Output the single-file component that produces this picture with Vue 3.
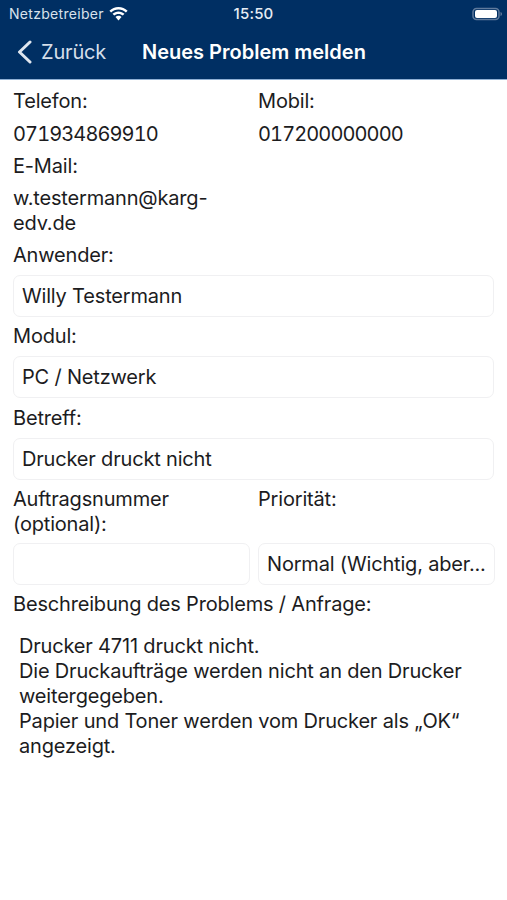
<script setup>
const contact = [
  { label: 'Telefon:', value: '071934869910' },
  { label: 'Mobil:', value: '017200000000' },
]
const fields = [
  { label: 'Anwender:', value: 'Willy Testermann' },
  { label: 'Modul:', value: 'PC / Netzwerk' },
  { label: 'Betreff:', value: 'Drucker druckt nicht' },
]
const lines = [
  'Drucker 4711 druckt nicht.',
  'Die Druckaufträge werden nicht an den Drucker',
  'weitergegeben.',
  'Papier und Toner werden vom Drucker als „OK“',
  'angezeigt.',
]
</script>

<template>
  <div class="page">
    <header class="head">
      <div class="status">
        <div class="carrier">
          <span>Netzbetreiber</span>
          <svg class="wifi" width="19" height="14" viewBox="0 0 19 14">
            <path d="M9.500 0C6 0 2.800 1.400.4 3.700l1.700 1.800C4 3.600 6.600 2.500 9.500 2.500s5.500 1.100 7.400 3l1.700-1.800C16.200 1.400 13 0 9.500 0z" fill="#fff"/>
            <path d="M9.500 4.400c-2.300 0-4.400.9-6 2.400l1.700 1.800c1.100-1.100 2.600-1.700 4.300-1.700s3.200.6 4.300 1.700l1.700-1.800c-1.600-1.500-3.700-2.400-6-2.400z" fill="#fff"/>
            <path d="M9.500 8.800c-1.200 0-2.200.5-3 1.200l3 3.400 3-3.400c-.8-.7-1.800-1.200-3-1.200z" fill="#fff"/>
          </svg>
        </div>
        <span class="time">15:50</span>
        <svg class="battery" width="31" height="14" viewBox="0 0 31 14">
          <rect x="1" y="1.500" width="26" height="11" rx="3.500" fill="none" stroke="#5f7a9c" stroke-width="1.500"/>
          <rect x="3" y="3" width="22" height="8" rx="2" fill="#fff"/>
          <path d="M28.500 5v4c.9-.3 1.500-1.100 1.500-2s-.6-1.700-1.500-2z" fill="#5f7a9c"/>
        </svg>
      </div>
      <nav class="nav">
        <div class="back">
          <svg width="16" height="24" viewBox="0 0 16 24">
            <path d="M14 2 3.500 12 14 22" fill="none" stroke="#dfe6ef" stroke-width="3" stroke-linecap="round" stroke-linejoin="round"/>
          </svg>
          <span>Zurück</span>
        </div>
        <h1 class="title">Neues Problem melden</h1>
      </nav>
    </header>

    <main class="form">
      <div class="cols contact">
        <div v-for="c in contact" :key="c.label" class="col">
          <div class="label">{{ c.label }}</div>
          <div class="value num">{{ c.value }}</div>
        </div>
      </div>
      <div class="mail">
        <div class="label">E-Mail:</div>
        <div class="value wrap">w.testermann@karg-<br>edv.de</div>
      </div>

      <div v-for="f in fields" :key="f.label" class="field">
        <div class="label">{{ f.label }}</div>
        <div class="input">{{ f.value }}</div>
      </div>

      <div class="cols order">
        <div class="col">
          <div class="label two">Auftragsnummer<br>(optional):</div>
          <div class="input"></div>
        </div>
        <div class="col">
          <div class="label two">Priorität:</div>
          <div class="input">Normal (Wichtig, aber...</div>
        </div>
      </div>

      <div class="label desc">Beschreibung des Problems / Anfrage:</div>
      <div class="text">
        <div v-for="l in lines" :key="l">{{ l }}</div>
      </div>
    </main>
  </div>
</template>

<style scoped>
.page {
  width: 507px;
  height: 900px;
  background: #fff;
  overflow: hidden;
  font-family: Inter, "Liberation Sans", sans-serif;
  color: #1c1c1e;
  font-size: 20px;
  letter-spacing: -0.18px;
}
.head {
  height: 79px;
  background: #002f63;
  border-bottom: 1px solid #8fb0d4;
  color: #fff;
}
.status {
  height: 27px;
  display: grid;
  grid-template-columns: 1fr auto 1fr;
  align-items: center;
  padding: 0 4px;
  font-size: 14px;
  letter-spacing: 0.3px;
}
.carrier {
  display: flex;
  align-items: center;
  gap: 5px;
  margin-left: 5px;
  color: #d9e2ec;
}
.time {
  font-size: 15px;
  font-weight: 500;
  letter-spacing: 0.2px;
  color: #e6ecf3;
}
.battery {
  justify-self: end;
}
.nav {
  height: 52px;
  display: flex;
  align-items: center;
  padding-left: 16px;
  padding-bottom: 2px;
  box-sizing: border-box;
}
.back {
  width: 126px;
  display: flex;
  align-items: center;
  gap: 9px;
  color: #d5dfea;
}
.title {
  margin: 0;
  font-size: 20px;
  font-weight: 600;
  letter-spacing: 0;
  color: #fff;
}
.form {
  padding: 9px 13px 0;
}
.cols {
  display: grid;
  grid-template-columns: 237px 237px;
  gap: 8px;
}
.contact .col {
  display: flex;
  flex-direction: column;
}
.label {
  line-height: 25px;
}
.value {
  line-height: 25px;
  margin-top: 7px;
}
.num {
  margin-top: 8px;
  font-variant-numeric: tabular-nums;
  letter-spacing: -0.9px;
}
.contact {
  height: 65px;
}
.mail {
  width: 237px;
}
.field {
  margin-top: 7px;
}
.field + .field + .field {
  margin-top: 8px;
}
.input {
  height: 42px;
  margin-top: 7px;
  box-sizing: border-box;
  padding: 0 8px;
  border: 1px solid #f0f0f2;
  border-radius: 7px;
  line-height: 40px;
  white-space: nowrap;
  overflow: hidden;
}
.order {
  margin-top: 7px;
}
.order .input {
  margin-top: 6px;
}
.two {
  height: 50px;
}
.desc {
  margin-top: 7px;
}
.text {
  margin-top: 17px;
  padding-left: 6px;
  line-height: 25px;
}
</style>
